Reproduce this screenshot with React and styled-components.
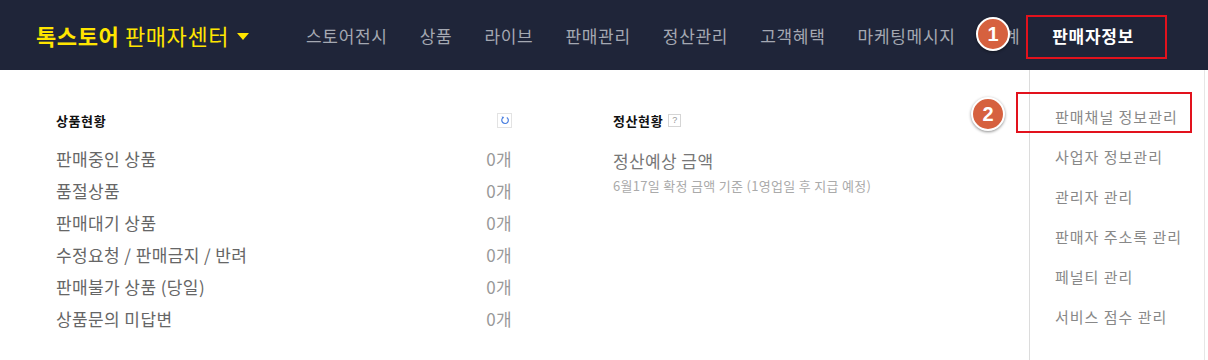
import styled, { createGlobalStyle } from 'styled-components';

const GlobalStyle = createGlobalStyle`
  body {
    margin: 0;
    background: #fff;
    font-family: "Noto Sans CJK KR", "Noto Sans", sans-serif;
  }
`;

const navItems = ['스토어전시', '상품', '라이브', '판매관리', '정산관리', '고객혜택', '마케팅메시지', '통계'];

const products = [
  '판매중인 상품',
  '품절상품',
  '판매대기 상품',
  '수정요청 / 판매금지 / 반려',
  '판매불가 상품 (당일)',
  '상품문의 미답변',
];

const menuItems = ['판매채널 정보관리', '사업자 정보관리', '관리자 관리', '판매자 주소록 관리', '페널티 관리', '서비스 점수 관리'];

export default function App() {
  return (
    <>
      <GlobalStyle />
      <Page>
        <Header>
          <Logo>
            <strong>톡스토어</strong> 판매자센터
            <Caret />
          </Logo>
          <Nav>
            {navItems.map((item) => (
              <NavItem key={item}>{item}</NavItem>
            ))}
            <NavItem active>판매자정보</NavItem>
          </Nav>
        </Header>

        <Content>
          <Section width="456px">
            <TitleRow spread>
              <Title>상품현황</Title>
              <IconBox>
                <svg width="10" height="10" viewBox="0 0 10 10">
                  <path d="M3 2.6 A3.3 3.3 0 1 0 6.8 2.4" fill="none" stroke="#4a7fe0" strokeWidth="1.2" />
                  <path d="M1.6 1.4 L4.2 1.9 L2.8 4 Z" fill="#4a7fe0" />
                </svg>
              </IconBox>
            </TitleRow>
            <List>
              {products.map((p) => (
                <Row key={p}>
                  <Label>{p}</Label>
                  <Count>0개</Count>
                </Row>
              ))}
            </List>
          </Section>

          <Section width="320px">
            <TitleRow>
              <Title>정산현황</Title>
              <HelpBox>?</HelpBox>
            </TitleRow>
            <Settle>정산예상 금액</Settle>
            <SettleNote>6월17일 확정 금액 기준 (1영업일 후 지급 예정)</SettleNote>
          </Section>
        </Content>

        <Menu>
          {menuItems.map((m) => (
            <MenuItem key={m}>{m}</MenuItem>
          ))}
        </Menu>

        <Mark top="15px" left="1026px" width="141px" height="44px" />
        <Mark top="92px" left="1016px" width="176px" height="41px" />
        <Badge top="17px" left="976px">1</Badge>
        <Badge top="97px" left="971px">2</Badge>
      </Page>
    </>
  );
}

const Page = styled.div`
  position: relative;
  width: 1208px;
  height: 360px;
  overflow: hidden;
`;

const Header = styled.div`
  height: 70px;
  background: #1f2539;
  display: flex;
  align-items: center;
  padding-left: 36px;
  box-sizing: border-box;
`;

const Logo = styled.div`
  display: flex;
  align-items: center;
  color: #ffe500;
  font-size: 22px;
  letter-spacing: 0.6px;
  white-space: pre;
  width: 270px;
  strong {
    font-weight: 700;
  }
`;

const Caret = styled.span`
  width: 0;
  height: 0;
  margin-left: 8px;
  margin-top: 3px;
  border-left: 6px solid transparent;
  border-right: 6px solid transparent;
  border-top: 7px solid #ffe500;
`;

const Nav = styled.div`
  display: flex;
  gap: 32px;
`;

const NavItem = styled.div`
  font-size: 17px;
  letter-spacing: 0.7px;
  color: ${(p) => (p.active ? '#fff' : '#a4a8b2')};
  font-weight: ${(p) => (p.active ? 700 : 400)};
  white-space: nowrap;
`;

const Content = styled.div`
  display: flex;
  gap: 101px;
  padding: 42px 0 0 56px;
`;

const Section = styled.div`
  width: ${(p) => p.width};
`;

const TitleRow = styled.div`
  display: flex;
  align-items: center;
  justify-content: ${(p) => (p.spread ? 'space-between' : 'flex-start')};
  height: 16px;
  gap: 5px;
`;

const Title = styled.div`
  font-size: 13px;
  font-weight: 700;
  letter-spacing: 0.6px;
  color: #111;
`;

const IconBox = styled.div`
  width: 13px;
  height: 13px;
  border: 1px solid #e3e3e3;
  display: flex;
  align-items: center;
  justify-content: center;
`;

const HelpBox = styled.div`
  width: 11px;
  height: 11px;
  border: 1px solid #d5d5d5;
  color: #999;
  font-size: 9px;
  line-height: 11px;
  text-align: center;
  font-family: "Liberation Sans", sans-serif;
`;

const List = styled.div`
  margin-top: 14px;
`;

const Row = styled.div`
  height: 32px;
  display: flex;
  align-items: center;
  justify-content: space-between;
  font-size: 17px;
  letter-spacing: 0.4px;
`;

const Label = styled.span`
  color: #666;
`;

const Count = styled.span`
  color: #999;
`;

const Settle = styled.div`
  margin-top: 22px;
  font-size: 17px;
  letter-spacing: 0.4px;
  color: #777;
  line-height: 22px;
`;

const SettleNote = styled.div`
  margin-top: 4px;
  font-size: 13px;
  letter-spacing: 0.3px;
  color: #aaa;
  white-space: nowrap;
`;

const Menu = styled.div`
  position: absolute;
  top: 70px;
  left: 1029px;
  width: 176px;
  bottom: 0;
  background: #fff;
  border-left: 1px solid #dcdcdc;
  border-right: 1px solid #e6e6e6;
  padding-top: 27px;
  box-sizing: border-box;
`;

const MenuItem = styled.div`
  height: 40px;
  line-height: 40px;
  padding-left: 25px;
  font-size: 15px;
  letter-spacing: 1px;
  color: #888;
  white-space: nowrap;
`;

const Mark = styled.div`
  position: absolute;
  top: ${(p) => p.top};
  left: ${(p) => p.left};
  width: ${(p) => p.width};
  height: ${(p) => p.height};
  border: 2px solid #e2121d;
  box-sizing: border-box;
`;

const Badge = styled.div`
  position: absolute;
  top: ${(p) => p.top};
  left: ${(p) => p.left};
  width: 34px;
  height: 34px;
  border-radius: 50%;
  background: #d6613f;
  border: 2px solid #fff;
  box-sizing: border-box;
  box-shadow: 0 1px 3px rgba(0, 0, 0, 0.45);
  color: #fff;
  font-family: "Liberation Sans", Arial, sans-serif;
  font-weight: 700;
  font-size: 20px;
  display: flex;
  align-items: center;
  justify-content: center;
`;
